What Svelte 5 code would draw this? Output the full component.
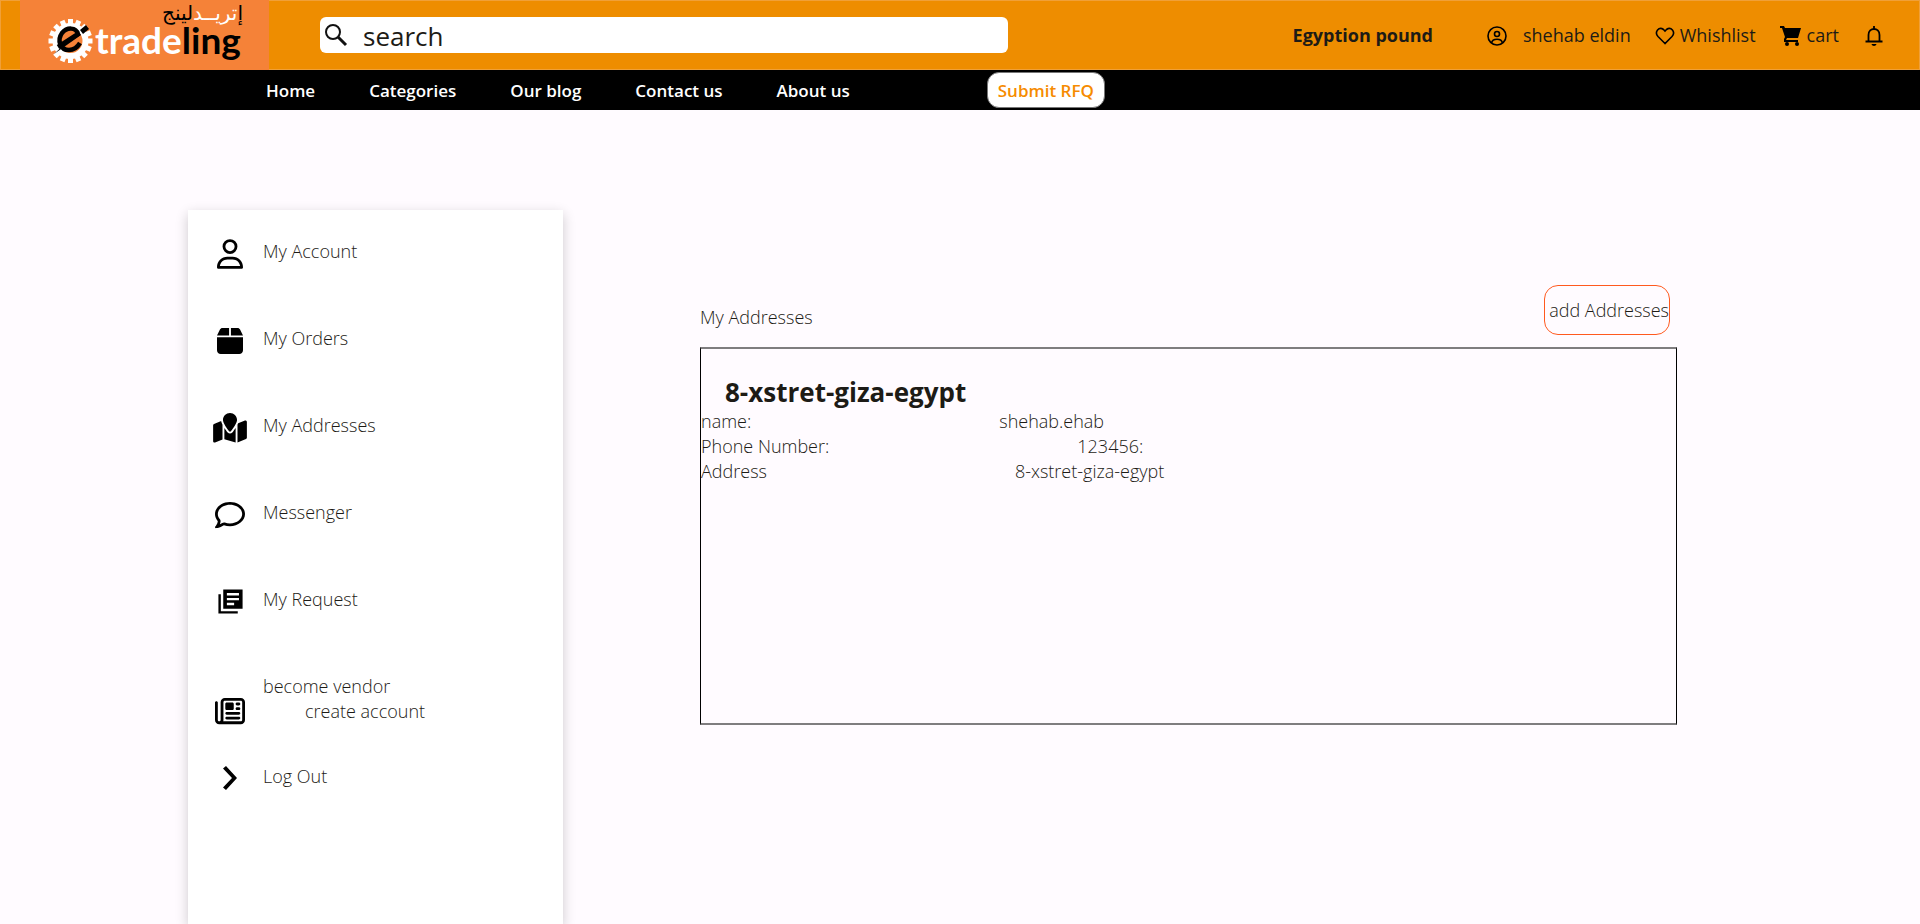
<script>
  const links = ['Home', 'Categories', 'Our blog', 'Contact us', 'About us'];

  const menu = [
    { label: 'My Account', w: 26, h: 30, box: '0 0 448 512', d: 'M304 128a80 80 0 1 0 -160 0 80 80 0 1 0 160 0zM96 128a128 128 0 1 1 256 0A128 128 0 1 1 96 128zM49.3 464H398.7c-8.9-63.3-63.3-112-129-112H178.3c-65.7 0-120.1 48.7-129 112zM0 482.3C0 383.8 79.8 304 178.3 304h91.4C368.2 304 448 383.8 448 482.3c0 16.4-13.3 29.7-29.7 29.7H29.7C13.3 512 0 498.7 0 482.3z' },
    { label: 'My Orders', w: 26, h: 30, box: '0 0 448 512', d: 'M50.7 58.5L0 160H208V32H93.7C75.5 32 58.9 42.3 50.7 58.5zM240 160H448L397.3 58.5C389.1 42.3 372.5 32 354.3 32H240V160zm208 32H0V416c0 35.3 28.7 64 64 64H384c35.3 0 64-28.7 64-64V192z' },
    { label: 'My Addresses', w: 34, h: 30, box: '0 0 576 512', d: 'M408 120c0 54.6-73.1 151.9-105.2 192c-7.7 9.6-22 9.6-29.6 0C241.1 271.9 168 174.6 168 120C168 53.7 221.7 0 288 0s120 53.7 120 120zm8 80.4c3.5-6.9 6.7-13.8 9.6-20.6c.5-1.2 1-2.5 1.5-3.7l116-46.4C558.9 123.4 576 135 576 152V422.8c0 9.8-6 18.6-15.1 22.3L416 503V200.4zM137.6 138.3c2.4 14.1 7.2 28.3 12.8 41.5c2.9 6.8 6.1 13.7 9.6 20.6V451.8L32.9 502.7C17.1 509 0 497.4 0 480.4V209.6c0-9.8 6-18.6 15.1-22.3l122.6-49zM327.8 332c13.9-17.4 35.7-45.7 56.2-77V504.3L192 449.4V255c20.5 31.3 42.3 59.6 56.2 77c20.5 25.6 59.1 25.6 79.6 0z' },
    { label: 'Messenger', w: 30, h: 30, box: '0 0 512 512', d: 'M123.6 391.3c12.9-9.4 29.6-11.8 44.6-6.4c26.5 9.6 56.2 15.1 87.8 15.1c124.7 0 208-80.5 208-160s-83.3-160-208-160S48 160.5 48 240c0 32 12.4 62.8 35.7 89.2c8.6 9.7 12.8 22.5 11.8 35.5c-1.4 18.1-5.7 34.7-11.3 49.4c17-7.9 31.1-16.7 39.4-22.7zM21.2 431.9c1.8-2.7 3.5-5.4 5.1-8.1c10-16.6 19.5-38.4 21.4-62.9C17.7 326.8 0 285.1 0 240C0 125.1 114.6 32 256 32s256 93.1 256 208s-114.6 208-256 208c-37.1 0-72.3-6.4-104.1-17.9c-11.9 8.7-31.3 20.6-54.3 30.6c-15.1 6.6-32.3 12.6-50.1 16.1c-.8 .2-1.6 .3-2.4 .5c-4.4 .8-8.7 1.5-13.2 1.9c-.2 0-.5 .1-.7 .1c-5.1 .5-10.2 .8-15.3 .8c-6.5 0-12.3-3.9-14.8-9.9c-2.5-6-1.1-12.8 3.4-17.4c4.1-4.2 7.8-8.7 11.3-13.5c1.7-2.3 3.3-4.6 4.8-6.9z' },
    { label: 'My Request', w: 29, h: 29, box: '0 0 24 24', d: 'M4 6H2v16h16v-2H4V6zm18-4H6v16h16V2zm-3 9H9V9h10v2zm-4 4H9v-2h6v2zm4-8H9V5h10v2z' },
    { label: 'become vendor', sub: 'create account', w: 30, h: 30, box: '0 0 512 512', d: 'M168 80c-13.3 0-24 10.7-24 24V408c0 8.4-1.4 16.5-4.1 24H440c13.3 0 24-10.7 24-24V104c0-13.3-10.7-24-24-24H168zM72 480c-39.8 0-72-32.2-72-72V112C0 98.7 10.7 88 24 88s24 10.7 24 24V408c0 13.3 10.7 24 24 24s24-10.7 24-24V104c0-39.8 32.2-72 72-72H440c39.8 0 72 32.2 72 72V408c0 39.8-32.2 72-72 72H72zM176 136c0-13.3 10.7-24 24-24h96c13.3 0 24 10.7 24 24v80c0 13.3-10.7 24-24 24H200c-13.3 0-24-10.7-24-24V136zm200-24h32c13.3 0 24 10.7 24 24s-10.7 24-24 24H376c-13.3 0-24-10.7-24-24s10.7-24 24-24zm0 80h32c13.3 0 24 10.7 24 24s-10.7 24-24 24H376c-13.3 0-24-10.7-24-24s10.7-24 24-24zM200 272H408c13.3 0 24 10.7 24 24s-10.7 24-24 24H200c-13.3 0-24-10.7-24-24s10.7-24 24-24zm0 80H408c13.3 0 24 10.7 24 24s-10.7 24-24 24H200c-13.3 0-24-10.7-24-24s10.7-24 24-24z' },
    { label: 'Log Out', compact: true, w: 14, h: 24, box: '0 0 14 24', d: 'M3 0L14 12L3 24L0 21.500L9 12L0 2.500z' }
  ];

  const details = [
    ['name:', 'shehab.ehab'],
    ['Phone Number:', '123456:'],
    ['Address', '8-xstret-giza-egypt']
  ];

  // Evenly spaced teeth around the logo's wheel
  const teeth = Array.from({ length: 16 }, (_, i) => (i * 360) / 16);
</script>

<header class="top">
  <a class="logo" href="#home" aria-label="etradeling">
    <svg width="210" height="70" viewBox="0 0 210 70">
      <g fill="#fff">
        {#each teeth as angle}
          <rect x="28" y="19" width="5" height="8" transform="rotate({angle} 30.500 41)" />
        {/each}
      </g>
      <circle cx="30.500" cy="41" r="15" fill="#f58238" stroke="#fff" stroke-width="6" />
      <path d="M18 47L38 34C36 27 27 27 22 33C17 40 20 50 29 50C34 50 37 48 40 43" fill="none" stroke="#000" stroke-width="4.500" />
      <path d="M14 54L38 32L41 35z" fill="#000" />
      <path d="M40 30L46 25L49 29L43 34z" fill="#000" />
      <text class="word" x="55" y="54"><tspan fill="#fff">trade</tspan><tspan fill="#000">ling</tspan></text>
      <text class="arabic" x="203" y="20" direction="rtl"><tspan fill="#000">إ</tspan><tspan fill="#fff">تريــد</tspan><tspan fill="#000">لينج</tspan></text>
    </svg>
  </a>

  <label class="search">
    <svg width="24" height="24" viewBox="0 0 24 24" fill="none" stroke="#111">
      <circle cx="9" cy="9" r="7" stroke-width="2" />
      <path d="M14 14L22 22" stroke-width="3" />
    </svg>
    <input type="text" placeholder="search" aria-label="search" />
  </label>

  <button class="currency">Egyption pound</button>

  <div class="account">
    <a class="user" href="#profile">
      <svg width="20" height="20" viewBox="0 0 20 20" fill="none" stroke="#000" stroke-width="1.600">
        <circle cx="10" cy="10" r="9" />
        <circle cx="10" cy="8" r="2.500" />
        <path d="M4.500 17C5.500 12 14.500 12 15.500 17" />
      </svg>
      shehab eldin
    </a>
    <a class="wish" href="#wishlist">
      <svg width="20" height="18" viewBox="0 0 20 18" fill="none" stroke="#000" stroke-width="1.600">
        <path d="M10 16.500L3 9.500C-1 5 4 -1 8.500 2.500L10 4L11.500 2.500C16 -1 21 5 17 9.500z" />
      </svg>
      Whishlist
    </a>
    <a class="cart" href="#cart">
      <svg width="22" height="20" viewBox="0 0 22 20">
        <path d="M0 0H4L5 2H21L18 12H7L6 14H18V16H4V13L5 11L2 2H0z" />
        <circle cx="7" cy="18" r="2" />
        <circle cx="17" cy="18" r="2" />
      </svg>
      cart
    </a>
    <button class="bell" aria-label="Notifications">
      <svg width="18" height="20" viewBox="0 0 18 20">
        <path d="M0.500 15.500H17.500M3.500 15V9C3.500 1 14.500 1 14.500 9V15M9 0V3" fill="none" stroke="#000" stroke-width="1.800" />
        <path d="M6.500 18H11.500C11 20.500 7 20.500 6.500 18z" />
      </svg>
    </button>
  </div>
</header>

<nav class="bar">
  {#each links as link}
    <a href="#{link}">{link}</a>
  {/each}
  <button class="rfq">Submit RFQ</button>
</nav>

<div class="page">
  <aside class="side">
    {#each menu as item}
      <a href="#{item.label}" class="item" class:double={item.sub} class:compact={item.compact}>
        <span class="icon">
          <svg width={item.w} height={item.h} viewBox={item.box}><path d={item.d} /></svg>
        </span>
        <span class="label">
          {item.label}
          {#if item.sub}<span class="sub">{item.sub}</span>{/if}
        </span>
      </a>
    {/each}
  </aside>

  <main class="content">
    <div class="heading">
      <span>My Addresses</span>
      <button class="add">add Addresses</button>
    </div>
    <section class="card">
      <h2>8-xstret-giza-egypt</h2>
      <dl>
        {#each details as [term, value]}
          <div class="row"><dt>{term}</dt><dd>{value}</dd></div>
        {/each}
      </dl>
    </section>
  </main>
</div>

<style>
  :global(body) {
    background: #fffbff;
    color: #1d1b16;
    font: 300 18px/25px 'Open Sans', 'Noto Sans', sans-serif;
  }

  a {
    color: inherit;
    text-decoration: none;
  }

  button {
    padding: 0;
    border: 0;
    background: none;
    color: inherit;
    font: inherit;
    white-space: nowrap;
    cursor: pointer;
  }

  svg {
    display: block;
    flex: none;
  }

  .top {
    box-sizing: border-box;
    display: flex;
    align-items: center;
    height: 70px;
    padding: 0 36px 0 19px;
    border: 1px solid #f0a038;
    background: #ee8d00;
    white-space: nowrap;
  }

  .logo {
    width: 249px;
    height: 70px;
    flex: none;
    background: #f58238;
  }

  .logo svg {
    margin-left: 20px;
  }

  .word {
    font: 700 37px Lato, sans-serif;
  }

  .arabic {
    font: 20px 'DejaVu Sans', sans-serif;
  }

  .search {
    box-sizing: border-box;
    display: flex;
    align-items: center;
    gap: 15px;
    height: 36px;
    flex: 0 1 688px;
    margin-left: 51px;
    padding: 0 4px;
    border-radius: 6px;
    background: #fff;
  }

  input {
    min-width: 0;
    flex: 1;
    padding: 2px 0 0;
    border: 0;
    outline: 0;
    background: none;
    font: 400 26px/34px 'Open Sans', sans-serif;
  }

  input::placeholder {
    color: #1d1b16;
    opacity: 1;
  }

  .currency {
    margin-left: auto;
    font-weight: 700;
  }

  .account {
    display: flex;
    align-items: center;
    margin-left: 54px;
    gap: 24px;
    padding-top: 1px;
    font-weight: 400;
  }

  .account a {
    display: flex;
    align-items: center;
    gap: 5px;
  }

  .account .user {
    gap: 16px;
    font-weight: 500;
  }

  .account .bell {
    margin-left: 2px;
  }

  .bar {
    display: flex;
    align-items: center;
    gap: 54px;
    height: 40px;
    padding-left: 266px;
    background: #000;
    color: #fff;
    font-size: 17px;
    font-weight: 600;
    white-space: nowrap;
  }

  .rfq {
    height: 36px;
    margin-left: 83px;
    padding: 0 10px;
    border: 1px solid #777;
    border-radius: 12px;
    background: #fff;
    color: #f68b00;
  }

  .page {
    display: flex;
    align-items: stretch;
    box-sizing: border-box;
    min-height: calc(100vh - 110px);
    padding: 100px 243px 0 188px;
    overflow: hidden;
  }

  .side {
    flex: 0 1 375px;
    background: #fff;
    box-shadow: 0 4px 12px rgba(0, 0, 0, 0.2);
  }

  .item {
    display: flex;
    align-items: center;
    height: 87px;
  }

  .icon {
    display: flex;
    justify-content: center;
    width: 34px;
    margin: 0 16px 0 25px;
  }

  .label {
    padding-bottom: 4px;
  }

  .double {
    align-items: flex-end;
    height: 81px;
  }

  .double .label {
    padding-bottom: 2px;
  }

  .sub {
    display: block;
    padding-left: 42px;
  }

  .compact {
    height: 104px;
  }

  .content {
    flex: 1;
    margin: 75px 0 0 137px;
  }

  .heading {
    display: flex;
    align-items: center;
    justify-content: space-between;
    padding-right: 7px;
  }

  .heading span {
    padding-top: 14px;
  }

  .add {
    height: 50px;
    padding: 0 0 0 4px;
    border: 1px solid #ff5a1f;
    border-radius: 14px;
  }

  .card {
    box-sizing: border-box;
    min-height: 378px;
    margin-top: 12px;
    padding-top: 26px;
    border: solid #000;
    border-width: 2px 1px;
    border-top-color: #7f7d7f;
    border-bottom-color: #7f7d7f;
  }

  h2 {
    margin: 0;
    padding-left: 24px;
    font-size: 26px;
    line-height: 34px;
    font-weight: 700;
  }

  dl,
  dd {
    margin: 0;
  }

  .row {
    display: flex;
    gap: 248px;
  }
</style>
